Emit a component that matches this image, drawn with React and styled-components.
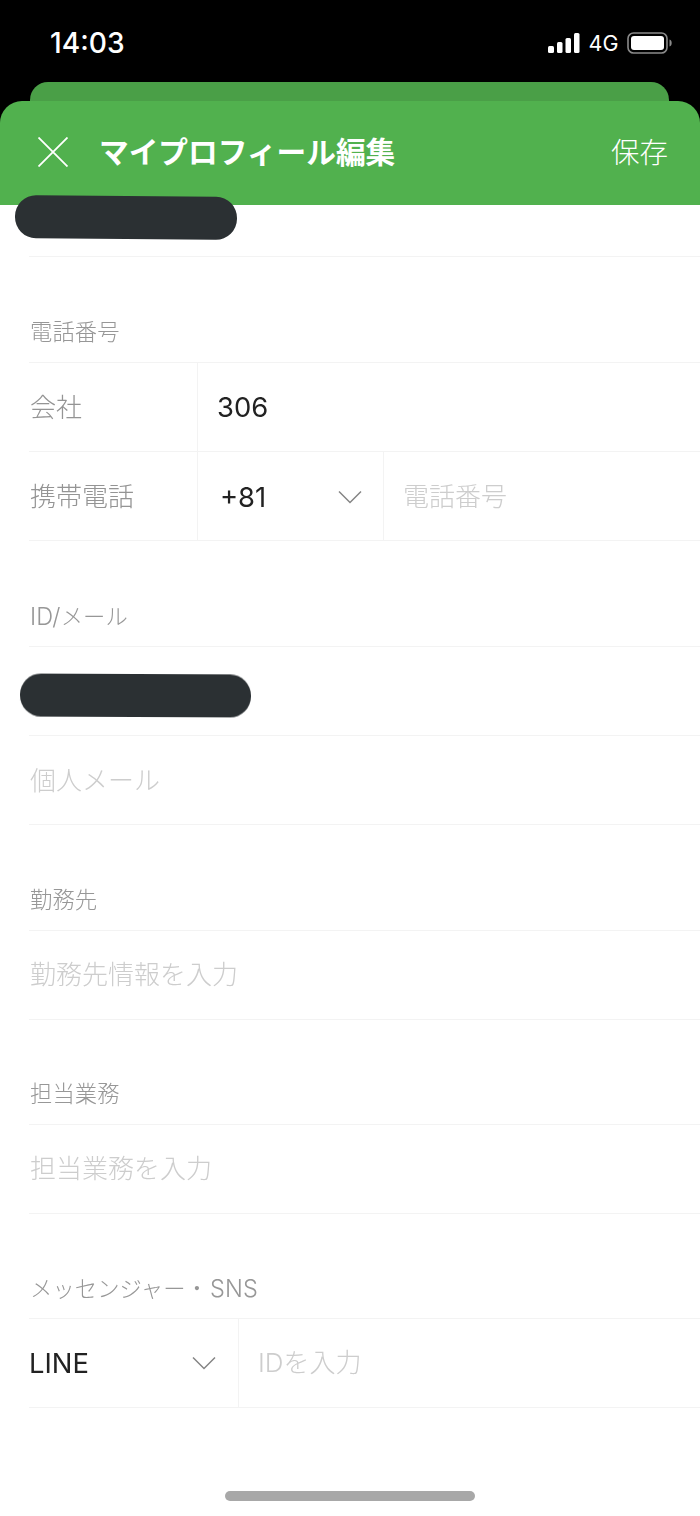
import React from "react";
import styled, { createGlobalStyle } from "styled-components";

const Global = createGlobalStyle`
  html, body { margin: 0; padding: 0; background: #fff; }
  body { font-family: Inter, "Noto Sans CJK JP", sans-serif; }
`;

const Page = styled.div`
  position: relative;
  width: 700px;
  height: 1516px;
  overflow: hidden;
  background: #fff;
`;

const StatusBar = styled.div`
  height: 82px;
  background: #000;
  display: flex;
  justify-content: space-between;
  align-items: flex-start;
  padding: 25px 28px 0 50px;
  box-sizing: border-box;
  color: #fff;
`;

const Clock = styled.div`
  font-size: 28.2px;
  line-height: 36px;
  font-weight: 500;
`;

const StatusIcons = styled.div`
  display: flex;
  align-items: center;
  height: 36px;
  gap: 8.5px;
`;

const Network = styled.span`
  font-size: 21.5px;
  line-height: 36px;
  font-weight: 400;
`;

const SheetStack = styled.div`
  background: #000;
`;

const BackCard = styled.div`
  height: 19px;
  margin: 0 31px 0 30px;
  background: #4a9f47;
  border-radius: 18px 18px 0 0;
`;

const Header = styled.header`
  height: 104px;
  box-sizing: border-box;
  background: #51b14e;
  border-radius: 22px 22px 0 0;
  display: flex;
  align-items: center;
  padding: 0 32px 2px 38px;
  color: #fff;
`;

const Title = styled.h1`
  flex: 1;
  margin: 0 0 3px 31px;
  font-family: "Noto Sans CJK JP", sans-serif;
  font-size: 29.7px;
  font-weight: 700;
  line-height: 40px;
`;

const Save = styled.span`
  font-family: "Noto Sans CJK JP", sans-serif;
  font-size: 28.5px;
  font-weight: 300;
  line-height: 40px;
  margin-bottom: 3px;
`;

const TopRow = styled.div`
  height: 52px;
  box-sizing: border-box;
  margin-left: 29px;
  border-bottom: 1px solid #f3f3f3;
`;

const Section = styled.section`
  padding-left: 29px;
  will-change: opacity;
`;

const SectionLabel = styled.div`
  height: ${(p) => (p.$tight ? 105 : 106)}px;
  box-sizing: border-box;
  padding-top: ${(p) => p.$offset ?? 59}px;
  padding-left: 1px;
  border-bottom: 1px solid #f3f3f3;
  font-size: 22.3px;
  line-height: 32px;
  font-weight: 300;
  letter-spacing: 0.1px;
  color: #979797;
`;

const LatinPart = styled.span`
  font-size: 23.5px;
  margin-left: ${(p) => p.$gap ?? 0}px;
`;

const Row = styled.div`
  display: flex;
  height: 89px;
  box-sizing: border-box;
  border-bottom: 1px solid #f3f3f3;
  align-items: stretch;
`;

const Cell = styled.div`
  display: flex;
  align-items: center;
  box-sizing: border-box;
  flex: ${(p) => (p.$width ? `0 0 ${p.$width}px` : "1")};
  padding-top: ${(p) => (p.$high ? 0 : 2)}px;
  padding-left: ${(p) => p.$pad ?? 1}px;
  padding-right: ${(p) => p.$padRight ?? 0}px;
  justify-content: ${(p) => (p.$spread ? "space-between" : "flex-start")};
  border-right: ${(p) => (p.$divider ? "1px solid #f3f3f3" : "none")};
`;

const FieldName = styled.span`
  font-size: 26px;
  font-weight: 300;
  color: #949494;
  line-height: 36px;
`;

const Value = styled.span`
  font-size: 27.4px;
  font-weight: 400;
  color: #222;
  line-height: 36px;
`;

const Placeholder = styled.span`
  font-size: 26px;
  font-weight: 300;
  color: #cdcdcd;
  line-height: 36px;
`;

const Redaction = styled.div`
  position: absolute;
  left: ${(p) => p.$left}px;
  top: ${(p) => p.$top}px;
  width: ${(p) => p.$width}px;
  height: 42.5px;
  border-radius: 21px;
  background: #2b3033;
  transform: rotate(${(p) => p.$tilt}deg);
`;

const HomeBar = styled.div`
  position: absolute;
  left: 225px;
  top: 1491px;
  width: 250px;
  height: 10px;
  border-radius: 5px;
  background: #a8a8a8;
`;

const CloseIcon = () => (
  <svg width="30" height="30" viewBox="0 0 30 30" fill="none" stroke="#fff" strokeWidth="1.8">
    <path d="M0.5 0.5L29.5 29.5M29.5 0.5L0.5 29.5" />
  </svg>
);

const Chevron = () => (
  <svg width="24" height="14" viewBox="0 0 24 14" fill="none" stroke="#858585" strokeWidth="1.5">
    <path d="M1 1.5L12 12.5L23 1.5" />
  </svg>
);

const Signal = () => (
  <svg width="32" height="20" viewBox="0 0 32 20" fill="#fff">
    <rect x="0" y="13" width="6" height="7" rx="1.5" />
    <rect x="9" y="9" width="5.5" height="11" rx="1.5" />
    <rect x="17.5" y="5" width="5.5" height="15" rx="1.5" />
    <rect x="26" y="0" width="5.5" height="20" rx="1.5" />
  </svg>
);

const Battery = () => (
  <svg width="45" height="22" viewBox="0 0 45 22" fill="none">
    <rect x="1" y="1" width="39" height="20" rx="5.5" stroke="#8a8a8a" strokeWidth="1.6" />
    <rect x="4" y="4" width="33" height="14" rx="3" fill="#fff" />
    <path d="M42.5 7.5c1.5.4 2.2 1.8 2.2 3.5s-.7 3.1-2.2 3.5z" fill="#8a8a8a" />
  </svg>
);

export default function App() {
  return (
    <Page>
      <Global />
      <StatusBar>
        <Clock>14:03</Clock>
        <StatusIcons>
          <Signal />
          <Network>4G</Network>
          <Battery />
        </StatusIcons>
      </StatusBar>
      <SheetStack>
        <BackCard />
        <Header>
          <CloseIcon />
          <Title>マイプロフィール編集</Title>
          <Save>保存</Save>
        </Header>
      </SheetStack>
      <TopRow />

      <Section>
        <SectionLabel>電話番号</SectionLabel>
        <Row>
          <Cell $width={169} $divider><FieldName>会社</FieldName></Cell>
          <Cell $high $pad={19}><Value>306</Value></Cell>
        </Row>
        <Row>
          <Cell $width={169} $divider><FieldName>携帯電話</FieldName></Cell>
          <Cell $width={186} $divider $pad={22} $padRight={21} $spread>
            <Value>+81</Value>
            <Chevron />
          </Cell>
          <Cell $pad={19}><Placeholder>電話番号</Placeholder></Cell>
        </Row>
      </Section>

      <Section>
        <SectionLabel $offset={60}><LatinPart>ID/</LatinPart>メール</SectionLabel>
        <Row />
        <Row>
          <Cell><Placeholder>個人メール</Placeholder></Cell>
        </Row>
      </Section>

      <Section>
        <SectionLabel>勤務先</SectionLabel>
        <Row>
          <Cell $high><Placeholder>勤務先情報を入力</Placeholder></Cell>
        </Row>
      </Section>

      <Section>
        <SectionLabel $tight $offset={58}>担当業務</SectionLabel>
        <Row>
          <Cell $high><Placeholder>担当業務を入力</Placeholder></Cell>
        </Row>
      </Section>

      <Section>
        <SectionLabel $tight $offset={59}>メッセンジャー・<LatinPart $gap={2}>SNS</LatinPart></SectionLabel>
        <Row>
          <Cell $high $width={210} $divider $pad={0} $padRight={22} $spread>
            <Value>LINE</Value>
            <Chevron />
          </Cell>
          <Cell $high $pad={19}><Placeholder>IDを入力</Placeholder></Cell>
        </Row>
      </Section>

      <Redaction $left={15} $top={195.5} $width={222} $tilt={0.5} />
      <Redaction $left={20} $top={673.5} $width={231} $tilt={0.3} />
      <HomeBar />
    </Page>
  );
}
